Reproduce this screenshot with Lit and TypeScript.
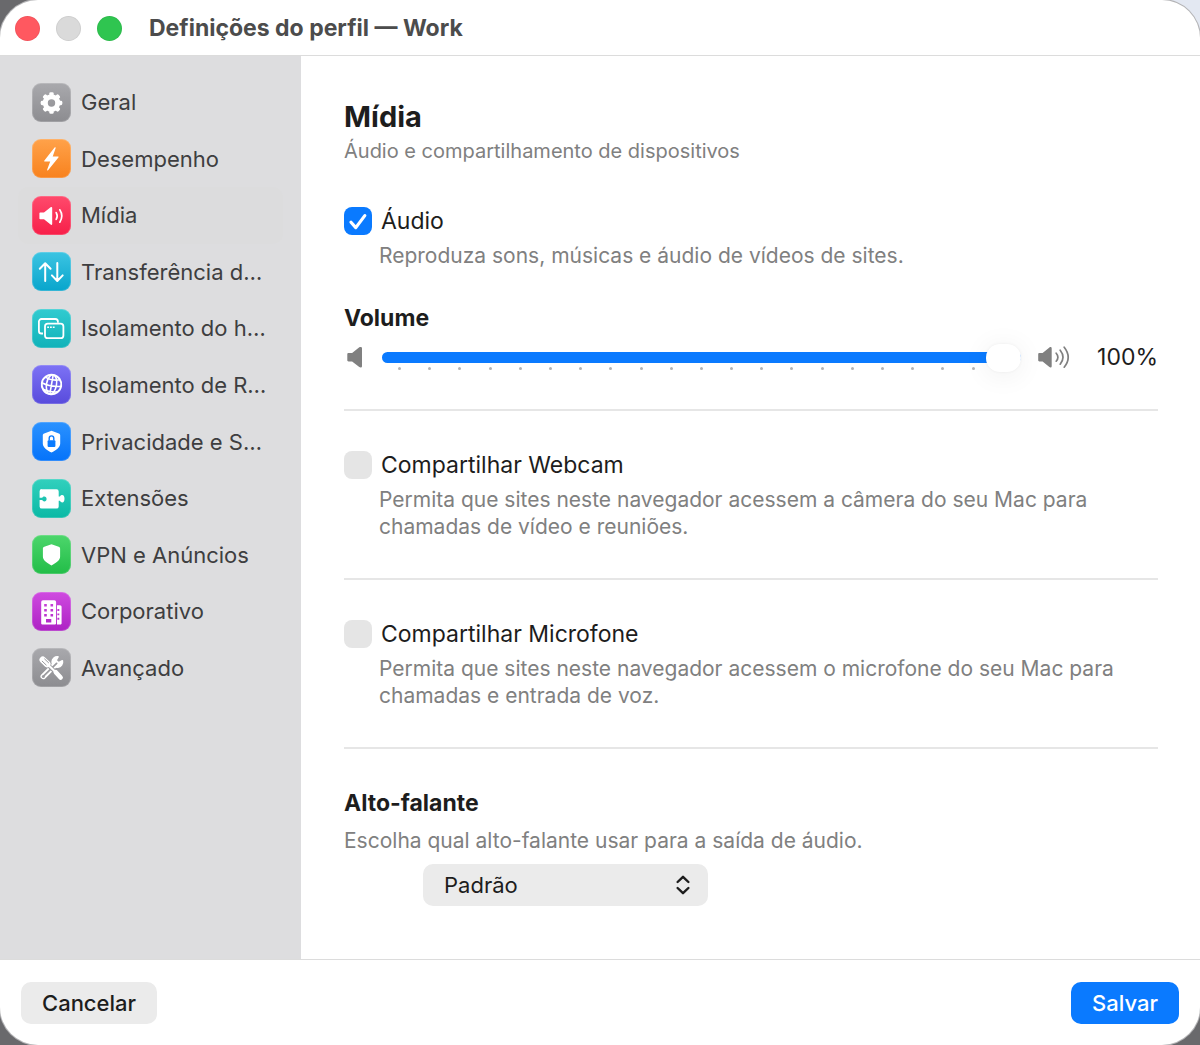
import { LitElement, html, css, svg, nothing } from "lit";
import type { SVGTemplateResult } from "lit";
import { customElement, property, state } from "lit/decorators.js";
import { classMap } from "lit/directives/class-map.js";

interface Section {
  id: string;
  label: string;
  glyph: SVGTemplateResult;
}

const gearTeeth = [0, 45, 90, 135, 180, 225, 270, 315];

const sections: Section[] = [
  {
    id: "geral",
    label: "Geral",
    glyph: svg`
      <circle cx="19.5" cy="20" r="6.2" fill="none" stroke="#fff" stroke-width="5"/>
      ${gearTeeth.map(
        (a) => svg`<rect x="17.3" y="9.2" width="4.4" height="5" rx="1.4" fill="#fff" transform="rotate(${a} 19.5 20)"/>`
      )}`,
  },
  {
    id: "desempenho",
    label: "Desempenho",
    glyph: svg`<path d="M22.6 8.6 12.4 21.4c-.4.5-.2 1 .4 1h5.4l-3 8.2c-.3.9.4 1.2.9.6l10.3-12.8c.4-.5.2-1-.4-1h-5.3l2.9-8.2c.3-.9-.5-1.200-1-.6z" fill="#fff"/>`,
  },
  {
    id: "midia",
    label: "Mídia",
    glyph: svg`
      <path d="M8.200 16.500h3.800l6.600-5.300c.8-.6 1.600-.3 1.600.6v16.200c0 .9-.8 1.200-1.600.6l-6.600-5.300H8.200c-.5 0-.8-.3-.8-.8v-5.200c0-.5.3-.8.8-.8z" fill="#fff"/>
      <path d="M24.200 16.600q2 3.400 0 6.800M27.800 13.800q4 6.200 0 12.400" fill="none" stroke="#fff" stroke-width="1.700" stroke-linecap="round"/>`,
  },
  {
    id: "transferencia",
    label: "Transferência de arquivos",
    glyph: svg`<path d="M13.200 29V11.500M7.800 16.800l5.400-5.600 5.400 5.600M25.300 11v17.500M19.900 23.400l5.400 5.600 5.400-5.600" fill="none" stroke="#fff" stroke-width="2" stroke-linecap="round" stroke-linejoin="round"/>`,
  },
  {
    id: "isolamento-host",
    label: "Isolamento do host",
    glyph: svg`
      <path d="M11 24.500H9.500a2.600 2.600 0 0 1-2.600-2.600v-9.300A2.600 2.600 0 0 1 9.500 10h13.800a2.600 2.600 0 0 1 2.600 2.600v1.200" fill="none" stroke="#fff" stroke-width="1.800"/>
      <rect x="13" y="14.600" width="18.400" height="14.600" rx="2.800" fill="none" stroke="#fff" stroke-width="1.800"/>
      <path d="M15.200 18.300h7.500" stroke="#fff" stroke-width="1.500" stroke-dasharray="1.800 1"/>`,
  },
  {
    id: "isolamento-rede",
    label: "Isolamento de Rede",
    glyph: svg`
      <g fill="none" stroke="#fff" stroke-width="1.600" transform="rotate(10 19.500 19.500)">
        <circle cx="19.500" cy="19.500" r="9.800" stroke-width="1.900"/>
        <ellipse cx="19.500" cy="19.500" rx="5" ry="9.800"/>
        <path d="M19.500 9.700v19.600M9.700 19.500q9.800 3 19.600 0M12 13.300q7.500 3 15 0M12 25.700q7.500 2 15 0"/>
      </g>`,
  },
  {
    id: "privacidade",
    label: "Privacidade e Segurança",
    glyph: svg`
      <path d="M19.500 8.800l7.300 2.700c.9.300 1.400.9 1.400 1.800v8.200c0 4-4.300 6.800-8.700 9-4.400-2.200-8.700-5-8.700-9v-8.200c0-.9.500-1.500 1.400-1.800z" fill="#fff"/>
      <rect x="15.600" y="18.300" width="7.800" height="6.600" rx="1" fill="#0a7bff"/>
      <path d="M17.200 18.500v-2.300a2.300 2.300 0 0 1 4.600 0v2.300" fill="none" stroke="#0a7bff" stroke-width="1.400"/>`,
  },
  {
    id: "extensoes",
    label: "Extensões",
    glyph: svg`<path d="M9.800 10.200h14.700a2.200 2.200 0 0 1 2.200 2.200v5.200h1.200c.7-1.300 1.500-1.600 2.300-1.600 1.500 0 2.300 1.600 2.300 3.700s-.8 3.700-2.300 3.700c-.8 0-1.600-.3-2.300-1.600h-1.200v5.600a2.200 2.200 0 0 1-2.200 2.200H9.800a2.200 2.200 0 0 1-2.200-2.200v-6.300h2.600c.5.900 1.200 1.300 2.100 1.300 1.400 0 2.300-1.100 2.300-2.500s-.9-2.500-2.300-2.500c-.9 0-1.600.4-2.100 1.300H7.600v-6.500a2.200 2.200 0 0 1 2.200-2.200z" fill="#fff"/>`,
  },
  {
    id: "vpn",
    label: "VPN e Anúncios",
    glyph: svg`<path d="M19.500 9.200l7.200 2.600c.9.300 1.400.9 1.400 1.800v8c0 3.900-4.200 6.700-8.600 8.800-4.400-2.100-8.600-4.900-8.600-8.800v-8c0-.9.500-1.500 1.400-1.800z" fill="#fff"/>`,
  },
  {
    id: "corporativo",
    label: "Corporativo",
    glyph: svg`
      <path fill-rule="evenodd" fill="#fff" d="M11 8.200h11.300a1.800 1.800 0 0 1 1.800 1.800v21.600a.8.800 0 0 1-.8.800H10a.8.800 0 0 1-.8-.8V10A1.800 1.800 0 0 1 11 8.200zM12.200 12v2.600h2.600V12zm6.300 0v2.600h2.600V12zm-6.300 5v2.600h2.600V17zm6.300 0v2.600h2.600V17zm-6.300 5v2.600h2.600V22zm6.300 0v2.600h2.600V22zm-4.500 5v3.400h5.300V27z"/>
      <path fill-rule="evenodd" fill="#fff" d="M25 13.200h3a1.600 1.600 0 0 1 1.600 1.600v16.800a.8.800 0 0 1-.8.800H25zM25.400 17v1.900h1.900V17zm0 4.400v1.900h1.900v-1.900zm0 4.400v1.900h1.900v-1.900z"/>`,
  },
  {
    id: "avancado",
    label: "Avançado",
    glyph: svg`
      <path d="M11.300 28.400 22.800 17" stroke="#fff" stroke-width="5.600" stroke-linecap="round"/>
      <path d="M30.400 12.800a5.200 5.200 0 1 1-4.400-4l-2 3.600 2.600 2.400z" fill="#fff" stroke="#fff" stroke-width="1.600" stroke-linejoin="round"/>
      <path d="M11.800 27.900 24.600 15.400" stroke="#9b9b9f" stroke-width="1.800" stroke-linecap="round"/>
      <circle cx="11.300" cy="28.400" r="1.500" fill="#9b9b9f"/>
      <path d="M14 15 29 29.500" stroke="#9b9b9f" stroke-width="4"/>
      <path d="M10.800 11.800l4.400 4.200" stroke="#fff" stroke-width="6.600" stroke-linecap="round"/>
      <path d="M15.500 16.200 24 24.500" stroke="#fff" stroke-width="2.200"/>
      <path d="M23.800 24.300l4.800 5.200" stroke="#fff" stroke-width="4.600" stroke-linecap="round"/>
      <path d="M10.200 13.200l4 3.800M12.600 11l4 3.800" stroke="#9b9b9f" stroke-width="1" stroke-linecap="round"/>`,
  },
];

const ticks = Array.from({ length: 21 }, (_, i) => i);

@customElement("sharing-option")
class SharingOption extends LitElement {
  @property() name = "";
  @property() label = "";
  @property() description = "";
  @property({ type: Boolean }) checked = false;

  static styles = css`
    :host {
      display: block;
    }
    .option {
      display: flex;
      align-items: center;
      gap: 9px;
      font-size: 23px;
      line-height: 28px;
      color: #1d1d1d;
    }
    .box {
      display: grid;
      flex: none;
    }
    .box > * {
      grid-area: 1 / 1;
    }
    .input {
      appearance: none;
      width: 28px;
      height: 28px;
      margin: 0;
      border-radius: 8px;
      background: #e5e5e5;
    }
    .input:checked {
      background: #0a7aff;
    }
    .mark {
      display: none;
      width: 28px;
      height: 28px;
      pointer-events: none;
    }
    .input:checked + .mark {
      display: block;
    }
    .description {
      margin: 7px 0 0;
      padding-left: 35px;
      font-size: 21px;
      line-height: 27px;
      color: #808080;
    }
  `;

  render() {
    return html`
      <div class="option">
        <span class="box">
          <input class="input" type="checkbox" id=${this.name} aria-describedby="description" .checked=${this.checked} />
          <svg class="mark" viewBox="0 0 28 28" aria-hidden="true">
            <path d="M7 15.200 11.800 20.600 20.800 8.600" fill="none" stroke="#fff" stroke-width="3.200" stroke-linecap="round" stroke-linejoin="round" />
          </svg>
        </span>
        <label for=${this.name}>${this.label}</label>
      </div>
      <p class="description" id="description">${this.description}</p>
    `;
  }
}

@customElement("app-root")
class AppRoot extends LitElement {
  @state() private current = "midia";
  @state() private volume = 100;

  static styles = css`
    :host {
      display: block;
      background: linear-gradient(#e3e8f2, #e3e8f2) right top / 50% 50% no-repeat #69696c;
      font-family: Inter, "Liberation Sans", sans-serif;
      color: #1d1d1d;
    }
    * {
      box-sizing: border-box;
    }
    .window {
      display: grid;
      grid-template-rows: auto 1fr auto;
      min-height: 100vh;
      overflow: hidden;
      border-radius: 38px;
      background: #fff;
      box-shadow: 0 0 0 1px #b4b4b6;
    }
    .titlebar {
      display: flex;
      align-items: center;
      gap: 27px;
      height: 56px;
      padding: 1px 15px 0;
      border-bottom: 1px solid #dcdcdc;
    }
    .lights {
      display: flex;
      gap: 16px;
    }
    .light {
      width: 25px;
      height: 25px;
      padding: 0;
      border: 1px solid rgb(0 0 0 / 5%);
      border-radius: 50%;
      background: #dadada;
    }
    .close {
      background: #ff5860;
    }
    .zoom {
      background: #2fc550;
    }
    .title {
      margin: 0;
      font-size: 23px;
      line-height: 28px;
      font-weight: 700;
      color: #4c4c4c;
    }
    .body {
      display: grid;
      grid-template-columns: 301px minmax(0, 1fr);
    }
    .sidebar {
      padding: 18px 18px;
      background: #dddddf;
    }
    .nav {
      display: grid;
      grid-template-columns: minmax(0, 1fr);
      grid-auto-rows: 1fr;
      min-height: 622px;
      margin: 0;
      padding: 0;
      list-style: none;
    }
    .link {
      display: flex;
      align-items: center;
      gap: 10px;
      height: 100%;
      padding: 0 12px 0 14px;
      border-radius: 10px;
      font-size: 22px;
      line-height: 28px;
      color: #3e3e40;
      text-decoration: none;
    }
    .current {
      background: #dcdcdd;
    }
    .label {
      overflow: hidden;
      text-overflow: ellipsis;
      white-space: nowrap;
    }
    .tile {
      flex: none;
      width: 39px;
      height: 39px;
      border-radius: 9px;
      box-shadow: inset 0 0 0 1px rgb(255 255 255 / 18%);
    }
    .geral,
    .avancado {
      background: linear-gradient(#a9a9ad, #8c8c90);
    }
    .desempenho {
      background: linear-gradient(#ffa24a, #f8821e);
    }
    .midia {
      background: linear-gradient(#ff4a6c, #f71f49);
    }
    .transferencia {
      background: linear-gradient(#3cc4e2, #08a5cc);
    }
    .isolamento-host {
      background: linear-gradient(#32cbd0, #10b2b9);
    }
    .isolamento-rede {
      background: linear-gradient(#7d72f5, #584bdc);
    }
    .privacidade {
      background: linear-gradient(#2b92ff, #0573fa);
    }
    .extensoes {
      background: linear-gradient(#32d0bd, #0ab9a5);
    }
    .vpn {
      background: linear-gradient(#4dd66c, #22bd48);
    }
    .corporativo {
      background: linear-gradient(#cf4be0, #ad22c4);
    }
    .content {
      padding: 43px 42px 52px 43px;
    }
    .heading {
      margin: 0;
      font-size: 29px;
      line-height: 36px;
      font-weight: 700;
    }
    .subheading {
      margin: 0;
      font-size: 23px;
      line-height: 28px;
      font-weight: 700;
    }
    .hint {
      margin: 3px 0 0;
      font-size: 20px;
      line-height: 27px;
      color: #808080;
    }
    .first {
      margin-top: 42px;
    }
    .volume {
      margin-top: 35px;
    }
    .slider-row {
      display: flex;
      align-items: center;
      margin-top: 11px;
    }
    .speaker {
      flex: none;
      height: 28px;
      fill: #808080;
    }
    .slider {
      display: grid;
      flex: 1;
      margin: 0 16px 0 18px;
    }
    .slider > * {
      grid-area: 1 / 1;
    }
    .ticks {
      display: flex;
      justify-content: space-between;
      align-self: end;
      padding: 0 16px 1px;
    }
    .tick {
      width: 3px;
      height: 3px;
      border-radius: 50%;
      background: #b4b4b4;
    }
    .range {
      position: relative;
      appearance: none;
      width: 100%;
      height: 28px;
      margin: 0;
      background: none;
    }
    .range::-webkit-slider-runnable-track {
      height: 11px;
      border-radius: 6px;
      background: linear-gradient(#0a7aff, #0a7aff) left / var(--fill) 100% no-repeat #e5e5e5;
    }
    .range::-webkit-slider-thumb {
      appearance: none;
      width: 35px;
      height: 28px;
      margin-top: -8px;
      border-radius: 14px;
      background: #fff;
      box-shadow: 0 3px 28px rgb(0 0 0 / 7%), 0 0 3px rgb(0 0 0 / 6%);
    }
    .amount {
      min-width: 87px;
      font-size: 23px;
      line-height: 28px;
      text-align: right;
    }
    .rule {
      height: 2px;
      margin: 38px 0 40px;
      border: 0;
      background: #e6e6e6;
    }
    .speaker-label {
      display: block;
    }
    .speaker-hint {
      margin-top: 10px;
      font-size: 21px;
    }
    .select {
      position: relative;
      width: 285px;
      margin: 10px 0 0 79px;
    }
    .picker {
      appearance: none;
      display: block;
      width: 100%;
      height: 42px;
      padding: 0 48px 0 21px;
      border: 0;
      border-radius: 10px;
      background: #ebebeb;
      font: 400 22px/28px Inter, "Liberation Sans", sans-serif;
      color: #1d1d1d;
    }
    .chevrons {
      position: absolute;
      top: 10px;
      right: 17px;
      width: 16px;
      height: 22px;
      pointer-events: none;
    }
    .footer {
      display: flex;
      justify-content: space-between;
      padding: 22px 21px 21px;
      border-top: 1px solid #dcdcdc;
    }
    .button {
      height: 42px;
      padding: 0 21px;
      border: 0;
      border-radius: 10px;
      background: #ebebeb;
      font: 500 22px/28px Inter, "Liberation Sans", sans-serif;
      color: #1d1d1d;
    }
    .primary {
      background: #0a7aff;
      color: #fff;
    }
  `;

  private select(event: Event, id: string) {
    event.preventDefault();
    this.current = id;
  }

  private renderNav() {
    return sections.map(
      (s) => html`
        <li>
          <a
            class=${classMap({ link: true, current: s.id === this.current })}
            href="#${s.id}"
            aria-current=${s.id === this.current ? "page" : nothing}
            @click=${(e: Event) => this.select(e, s.id)}
          >
            <svg class="tile ${s.id}" viewBox="0 0 39 39" aria-hidden="true">${s.glyph}</svg>
            <span class="label">${s.label}</span>
          </a>
        </li>
      `
    );
  }

  render() {
    return html`
      <div class="window">
        <header class="titlebar">
          <div class="lights">
            <button class="light close" aria-label="Fechar"></button>
            <button class="light" aria-label="Minimizar" disabled></button>
            <button class="light zoom" aria-label="Ampliar"></button>
          </div>
          <h1 class="title">Definições do perfil — Work</h1>
        </header>
        <div class="body">
          <nav class="sidebar">
            <ul class="nav">
              ${this.renderNav()}
            </ul>
          </nav>
          <main class="content">
            <h2 class="heading">Mídia</h2>
            <p class="hint">Áudio e compartilhamento de dispositivos</p>

            <sharing-option
              class="first"
              name="audio"
              label="Áudio"
              description="Reproduza sons, músicas e áudio de vídeos de sites."
              checked
            ></sharing-option>

            <section class="volume">
              <label class="subheading" for="volume">Volume</label>
              <div class="slider-row">
                <svg class="speaker" width="20" viewBox="0 0 20 28" aria-hidden="true">
                  <path d="M4.500 10h3.600l7.200-5.700c1.200-.8 2.700-.4 2.700.9v18c0 1.300-1.500 1.700-2.700.9L8.100 18.400H4.500c-.7 0-1.200-.5-1.200-1.200v-6c0-.7.500-1.200 1.200-1.200z" />
                </svg>
                <div class="slider">
                  <div class="ticks">${ticks.map(() => html`<span class="tick"></span>`)}</div>
                  <input
                    class="range"
                    id="volume"
                    type="range"
                    min="0"
                    max="100"
                    step="5"
                    style="--fill: ${this.volume}%"
                    .value=${String(this.volume)}
                    @input=${(e: Event) => (this.volume = Number((e.target as HTMLInputElement).value))}
                  />
                </div>
                <svg class="speaker" width="34" viewBox="0 0 34 28" aria-hidden="true">
                  <path d="M2.400 10h3.200L12.400 4.500c1-.8 2.300-.4 2.300.9v17.800c0 1.300-1.300 1.700-2.300.9L5.600 18.500H2.400c-.7 0-1.200-.5-1.200-1.200v-6.100c0-.7.500-1.200 1.200-1.200z" />
                  <path d="M19.200 10.200q3.400 4 0 8M23.200 7.200q5.600 7 0 14M27.200 4.200q8 10 0 20" fill="none" stroke="#808080" stroke-width="1.700" stroke-linecap="round" />
                </svg>
                <output class="amount" for="volume">${this.volume}%</output>
              </div>
            </section>

            <hr class="rule" />
            <sharing-option
              name="webcam"
              label="Compartilhar Webcam"
              description="Permita que sites neste navegador acessem a câmera do seu Mac para chamadas de vídeo e reuniões."
            ></sharing-option>
            <hr class="rule" />
            <sharing-option
              name="microfone"
              label="Compartilhar Microfone"
              description="Permita que sites neste navegador acessem o microfone do seu Mac para chamadas e entrada de voz."
            ></sharing-option>
            <hr class="rule" />

            <label class="subheading speaker-label" for="speaker">Alto-falante</label>
            <p class="hint speaker-hint">Escolha qual alto-falante usar para a saída de áudio.</p>
            <div class="select">
              <select class="picker" id="speaker">
                <option>Padrão</option>
              </select>
              <svg class="chevrons" viewBox="0 0 16 22" aria-hidden="true">
                <path d="M2.600 8 8 2.800 13.400 8M2.600 14 8 19.200 13.400 14" fill="none" stroke="#1d1d1d" stroke-width="2.400" stroke-linecap="round" stroke-linejoin="round" />
              </svg>
            </div>
          </main>
        </div>
        <footer class="footer">
          <button class="button">Cancelar</button>
          <button class="button primary">Salvar</button>
        </footer>
      </div>
    `;
  }
}
